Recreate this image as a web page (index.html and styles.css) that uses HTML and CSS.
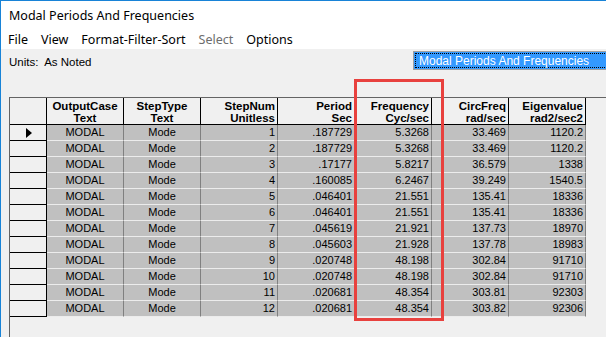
FILE: index.html
```html
<!DOCTYPE html>
<html lang="en">
<head>
    <meta charset="UTF-8">
    <title>Modal Periods And Frequencies</title>
    <link rel="stylesheet" href="styles.css">
</head>
<body>
    <div class="window">
        <div class="title-bar">Modal Periods And Frequencies</div>
        <nav class="menu">
            <span class="menu-item">File</span>
            <span class="menu-item">View</span>
            <span class="menu-item">Format-Filter-Sort</span>
            <span class="menu-item disabled">Select</span>
            <span class="menu-item">Options</span>
        </nav>

        <div class="main">
            <div class="toolbar">
                <span class="units">Units:&nbsp; As Noted</span>
                <div class="table-select">
                    <div class="table-select-inner">Modal Periods And Frequencies</div>
                </div>
            </div>

            <div class="grid">
                <div class="row head">
                    <div class="rh"></div>
                    <div class="cell center">OutputCase<br>Text</div>
                    <div class="cell center">StepType<br>Text</div>
                    <div class="cell">StepNum<br>Unitless</div>
                    <div class="cell">Period<br>Sec</div>
                    <div class="cell">Frequency<br>Cyc/sec</div>
                    <div class="cell">CircFreq<br>rad/sec</div>
                    <div class="cell">Eigenvalue<br>rad2/sec2</div>
                </div>
                <div id="rows"></div>
            </div>

            <div class="highlight"></div>
        </div>
    </div>

    <script>
        const data = [
            [1, '.187729', '5.3268', '33.469', '1120.2'],
            [2, '.187729', '5.3268', '33.469', '1120.2'],
            [3, '.17177', '5.8217', '36.579', '1338'],
            [4, '.160085', '6.2467', '39.249', '1540.5'],
            [5, '.046401', '21.551', '135.41', '18336'],
            [6, '.046401', '21.551', '135.41', '18336'],
            [7, '.045619', '21.921', '137.73', '18970'],
            [8, '.045603', '21.928', '137.78', '18983'],
            [9, '.020748', '48.198', '302.84', '91710'],
            [10, '.020748', '48.198', '302.84', '91710'],
            [11, '.020681', '48.354', '303.81', '92303'],
            [12, '.020681', '48.354', '303.82', '92306']
        ];

        const rows = document.getElementById('rows');

        data.forEach((d, i) => {
            const row = document.createElement('div');
            row.className = 'row';
            row.innerHTML =
                '<div class="rh">' + (i === 0 ? '<span class="pointer"></span>' : '') + '</div>' +
                '<div class="cell center">MODAL</div>' +
                '<div class="cell center">Mode</div>' +
                d.map(v => '<div class="cell">' + v + '</div>').join('');
            rows.appendChild(row);
        });
    </script>
</body>
</html>
```

FILE: styles.css
```css
* {
    margin: 0;
    padding: 0;
    box-sizing: border-box;
}

body {
    width: 606px;
    height: 337px;
    overflow: hidden;
    background: #fff;
}

.window {
    height: 337px;
    display: flex;
    flex-direction: column;
    border-left: 1px solid #1883d7;
    border-top: 1px solid #1883d7;
    font-family: "Noto Sans", sans-serif;
    color: #000;
}

.title-bar {
    height: 29px;
    padding: 6px 0 0 8px;
    font-size: 12.5px;
    line-height: 17px;
}

.menu {
    height: 19px;
    display: flex;
    padding-left: 7px;
    font-size: 12.5px;
    line-height: 20px;
}

.menu-item {
    margin-right: 13px;
}

.menu-item.disabled {
    color: #6d6d6d;
}

.main {
    flex-grow: 1;
    position: relative;
    display: flex;
    flex-direction: column;
    background: #f0f0f0;
    padding-left: 8px;
    font-family: "Liberation Sans", Arial, sans-serif;
}

.toolbar {
    height: 48px;
    display: flex;
    align-items: flex-start;
    padding-top: 2px;
}

.units {
    flex-shrink: 0;
    font-size: 11.5px;
    line-height: 19px;
    padding-top: 2px;
    width: 404px;
}

.table-select {
    flex-shrink: 0;
    width: 210px;
    height: 19px;
    border: 1px solid #a0a0a0;
    border-right: none;
    background: #808080;
    padding: 1px 0 1px 1px;
    box-shadow: inset 1px 1px 0 #696969;
}

.table-select-inner {
    height: 100%;
    background: #3399ff;
    border: 1px dotted #000;
    color: #fff;
    font-size: 12px;
    line-height: 14px;
    padding-left: 3px;
    outline: 1px solid #3399ff;
    white-space: nowrap;
}

.grid {
    flex-grow: 1;
    border-left: 1px solid #646464;
    border-top: 1px solid #646464;
    font-size: 11px;
}

.row {
    display: grid;
    grid-template-columns: 37px repeat(7, 77px);
    height: 16px;
    line-height: 15px;
}

.row.head {
    height: 27px;
    line-height: 12px;
    font-weight: bold;
    font-size: 11.5px;
}

.rh {
    background: #f0f0f0;
    border-right: 1px solid #000;
    border-bottom: 1px solid #000;
    display: flex;
    align-items: center;
    justify-content: center;
}

.pointer {
    width: 0;
    height: 0;
    border-top: 5px solid transparent;
    border-bottom: 5px solid transparent;
    border-left: 6px solid #000;
    margin-left: 1px;
}

.cell {
    background: #c0c0c0;
    border-right: 1px solid #808080;
    border-bottom: 1px solid #ececec;
    text-align: right;
    padding-right: 2px;
    white-space: nowrap;
    overflow: hidden;
}

.cell.center {
    text-align: center;
    padding-right: 0;
}

.head .cell {
    background: #f0f0f0;
    border-right: 1px solid #000;
    border-bottom: 1px solid #000;
    padding-top: 2px;
}

.highlight {
    position: absolute;
    left: 353px;
    top: 30px;
    width: 90px;
    height: 242px;
    border: 3px solid #e8413e;
}
```
